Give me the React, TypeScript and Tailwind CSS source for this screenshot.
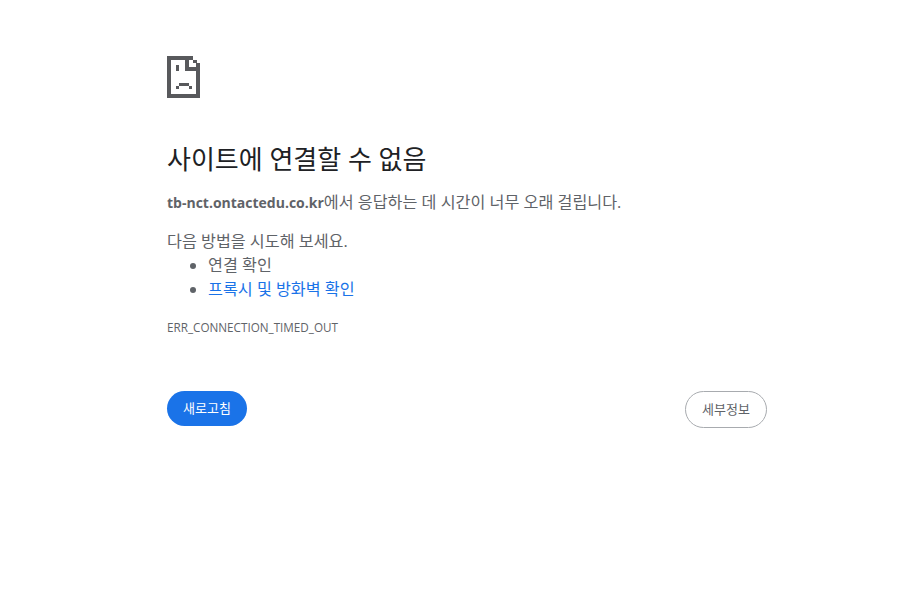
const kr = { fontFamily: '"Open Sans", "Noto Sans CJK KR", sans-serif' };

function Icon() {
  return (
    <svg width="33" height="42" viewBox="0 0 33 42" shapeRendering="crispEdges" fill="#58595c" className="block">
      <path d="M0 0H26V4H30V7H33V42H0V0ZM4 4V38H29V15H18V4Z" fillRule="evenodd" />
      <path d="M22 4H26V7H29V11H22Z" fill="#fff" />
      <path d="M9 9H12V15H9ZM12 27H22V30H25V33H22V30H12V33H9V30H12Z" />
    </svg>
  );
}

export default function App() {
  return (
    <div className="min-h-[592px] bg-white pt-14 text-[#5f6368]" style={kr}>
      <div className="ml-[167px] w-[600px]">
        <Icon />
        <h1 className="mt-[43px] text-[26px] leading-[36px] font-normal text-[#202124]">사이트에 연결할 수 없음</h1>
        <p className="mt-[13px] text-[16.2px] leading-[24px]"><strong className="text-[14px] font-bold">tb-nct.ontactedu.co.kr</strong>에서 응답하는 데 시간이 너무 오래 걸립니다.</p>
        <p className="mt-[14px] text-[16.2px] leading-[24px]">다음 방법을 시도해 보세요.</p>
        <ul className="list-disc pl-[41px] text-[16.2px] leading-[24px]">
          <li>연결 확인</li>
          <li><span className="text-[#1a73e8]">프록시 및 방화벽 확인</span></li>
        </ul>
        <div className="mt-[18px] text-[11.7px] leading-[16px]">ERR_CONNECTION_TIMED_OUT</div>
        <div className="mt-[56px] flex items-start justify-between">
          <button className="h-[35px] w-[80px] rounded-full bg-[#1a73e8] text-[13px] text-white">새로고침</button>
          <button className="h-[37px] w-[82px] rounded-full border border-[#a8abaf] bg-white text-[13px] text-[#5f6368]">세부정보</button>
        </div>
      </div>
    </div>
  );
}
